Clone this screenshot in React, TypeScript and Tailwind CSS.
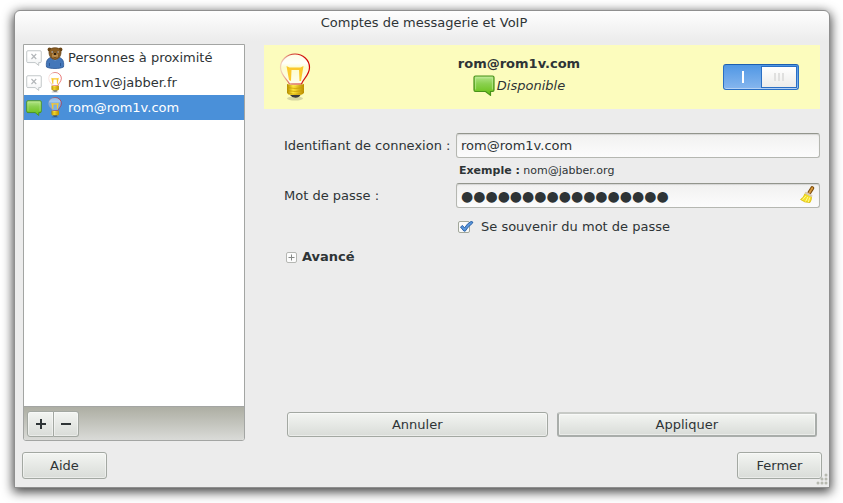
import { useId, useState } from "react";
import type { ReactNode } from "react";

const raised =
  "rounded-[3px] border border-[#a3a8a2] bg-gradient-to-b from-[#f3f5f2] to-[#d9dcd8] text-center shadow-[inset_0_0_0_1px_rgba(255,255,255,0.45)]";

const field =
  "h-[25px] w-full rounded-[3px] border border-[#b5b7b1] border-t-[#92958c] bg-gradient-to-b from-[#f1f1f0] to-[#fcfcfc] pl-1 leading-none text-[#2e3436] shadow-[inset_0_1px_1px_rgba(0,0,0,0.12)] outline-none";

function Bubble({ online, className }: { online: boolean; className: string }) {
  const id = useId();
  return (
    <svg viewBox="0 0 22 21" preserveAspectRatio="none" className={className} aria-hidden="true">
      <defs>
        <linearGradient id={id} x1="0" y1="0" x2="0" y2="1">
          <stop offset="0" stopColor={online ? "#b4e68c" : "#ffffff"} />
          <stop offset="0.4" stopColor={online ? "#8ad04f" : "#ffffff"} />
          <stop offset="1" stopColor={online ? "#66c012" : "#eef0f1"} />
        </linearGradient>
      </defs>
      <path
        d="M2.5 1h17a1.5 1.5 0 0 1 1.5 1.500v12.500a1.5 1.5 0 0 1-1.500 1.500H17.500v3.800L12.500 16.500h-10A1.5 1.5 0 0 1 1 15V2.500a1.500 1.500 0 0 1 1.500-1.500z"
        fill={`url(#${id})`}
        stroke={online ? "#48921a" : "#bcc1c4"}
        strokeWidth="1.2"
      />
      {online ? (
        <path d="M2.6 14.500V2.800h16.8V14.500" fill="none" stroke="#c9f0a4" strokeOpacity="0.6" />
      ) : (
        <path d="M7.500 5.200l6.600 6.600m0-6.600l-6.600 6.600" stroke="#b3b7ba" strokeWidth="1.600" fill="none" />
      )}
    </svg>
  );
}

function Bulb({ className, selected = false }: { className: string; selected?: boolean }) {
  const id = useId();
  return (
    <svg viewBox="0 0 32 48" className={className} aria-hidden="true">
      <defs>
        <linearGradient id={`${id}g`} x1="0" y1="0" x2="0" y2="1">
          <stop offset="0" stopColor="#fff" stopOpacity={selected ? 0.35 : 0.55} />
          <stop offset="0.3" stopColor="#fff" stopOpacity={selected ? 0.5 : 0.95} />
          <stop offset="0.45" stopColor="#fff" stopOpacity="0.25" />
          <stop offset="1" stopColor="#fff" stopOpacity={selected ? 0.3 : 0.75} />
        </linearGradient>
        <linearGradient id={`${id}r`} x1="0" y1="0" x2="1" y2="0">
          <stop offset="0" stopColor="#e8a8a0" stopOpacity="0.5" />
          <stop offset="0.4" stopColor="#cf3a30" />
          <stop offset="1" stopColor="#d40000" />
        </linearGradient>
        <linearGradient id={`${id}b`} x1="0" y1="0" x2="1" y2="0">
          <stop offset="0" stopColor="#b08a00" />
          <stop offset="0.35" stopColor="#ffe63b" />
          <stop offset="1" stopColor="#b98c00" />
        </linearGradient>
      </defs>
      <ellipse cx="16" cy="45.500" rx="8" ry="2" fill="#000" opacity="0.15" />
      <path
        d="M10.500 31C8 26 1.500 22 1.500 14.500a14.500 13.500 0 0 1 29 0C30.500 22 24 26 22.500 31z"
        fill={`url(#${id}g)`}
        stroke={`url(#${id}r)`}
        strokeWidth="1.200"
      />
      <path d="M7.500 13l3 1.500h11l3-1.500-2.500 15h-1.500l-.5-11h-7.500l-.5 11-2-1z" fill="#fbc82c" />
      <path d="M8 31q8 2.500 17 0v9q-2 2-4 2h-9q-3 0-4-2z" fill={`url(#${id}b)`} />
      <path d="M8 34.500q8 2 17 0M8 37.500q8 2 17 0M9 40.500q7 1.500 15 0" stroke="#c79a00" strokeWidth="0.700" fill="none" />
      <path d="M11 42h10.500q-1.500 2.800-5 2.800T11 42z" fill="#39393a" />
    </svg>
  );
}

function Person({ className }: { className: string }) {
  return (
    <svg viewBox="0 0 20 22" className={className} aria-hidden="true">
      <path d="M1.500 20C.5 13 3.500 11 6 10.500h8c2.500.5 5.500 2.500 4.500 9.500-4 2-13 2-17 0z" fill="#4477b9" stroke="#2b5795" strokeWidth="0.8" />
      <path d="M4.500 19v-3m11 3v-3" stroke="#274f8c" strokeWidth="0.8" />
      <path d="M7 11q3 5 6.500 0" fill="#7da4d6" />
      <circle cx="4.500" cy="2.500" r="1.900" fill="#6b4618" />
      <circle cx="15.500" cy="2.500" r="1.900" fill="#6b4618" />
      <path d="M4 5.500C4 2 6.500.8 10 .8s6 1.200 6 4.700-2.500 7-6 7-6-3.500-6-7z" fill="#8a5d22" stroke="#5e3b10" strokeWidth="0.7" />
      <ellipse cx="10" cy="8.500" rx="3" ry="2.800" fill="#bb8d4c" />
      <ellipse cx="10" cy="7" rx="1.500" ry="1" fill="#1e1408" />
      <path d="M6.700 5h1.400M12 5h1.400" stroke="#fff" strokeWidth="1.300" />
      <path d="M7.300 5h1M12 5h1" stroke="#1e1408" strokeWidth="1.100" />
      <path d="M8.300 10.200q1.700 1 3.400 0" stroke="#59370f" strokeWidth="0.7" fill="none" />
    </svg>
  );
}

function Broom() {
  return (
    <svg viewBox="0 0 16 17" className="h-[17px] w-4" aria-hidden="true">
      <path d="M9.500 6.500L12.200 2.200" stroke="#7b4a0a" strokeWidth="4" strokeLinecap="round" />
      <path d="M9.500 6.500L12.200 2.200" stroke="#d99a3c" strokeWidth="2" strokeLinecap="round" strokeDasharray="2 1.500" />
      <path d="M5 7.500l6.500 3q.3 3-1.500 6-5.500.3-9.500-3Q4 11.500 5 7.500z" fill="#f5e126" stroke="#d6b400" strokeWidth="0.700" />
      <path d="M5.800 10l-3.300 3.800M7.800 11l-2.300 4.500M9.800 11.500l-1.500 4.500" stroke="#fff9a0" strokeWidth="0.900" />
      <path d="M6 7l5.300 2.700" stroke="#d9cbb0" strokeWidth="2.400" strokeLinecap="round" />
    </svg>
  );
}

function Account({ icon, online = false, selected = false, children }: { icon: ReactNode; online?: boolean; selected?: boolean; children: ReactNode }) {
  return (
    <li>
      <button
        type="button"
        aria-pressed={selected}
        className={`flex h-[25px] w-full items-center gap-[3px] pl-0.5 text-left ${selected ? "bg-[#4a90d9] text-white" : ""}`}
      >
        <Bubble online={online} className="h-4 w-4 shrink-0" />
        <span className="flex w-5 shrink-0 justify-center">{icon}</span>
        <span>{children}</span>
      </button>
    </li>
  );
}

export default function App() {
  const [login, setLogin] = useState("rom@rom1v.com");
  const [secret, setSecret] = useState("●".repeat(17));
  const [remember, setRemember] = useState(true);
  const [active, setActive] = useState(true);

  return (
    <div className="flex min-h-screen bg-white pt-2.5 pr-[13px] pb-[15px] pl-3.5 font-['DejaVu_Sans',sans-serif] text-[13px] leading-4 text-[#2e3436]">
      <main className="flex flex-1 flex-col rounded-t-md border border-[#8f8f8f] bg-[#ececec] bg-[linear-gradient(#fefefe,#ececec_30px)] px-[7px] pb-2 shadow-[0_3px_11px_1px_rgba(0,0,0,0.75)]">
        <h1 className="pt-1 pb-[13px] pl-1 text-center">Comptes de messagerie et VoIP</h1>

        <div className="flex flex-1 gap-[19px] pr-0.5 pl-px">
          <aside className="flex w-[222px] shrink-0 flex-col overflow-hidden rounded-b-[3px] border border-[#a3a5a3] bg-white">
            <ul className="flex-1">
              <Account icon={<Person className="h-[22px] w-5" />}>Personnes à proximité</Account>
              <Account icon={<Bulb className="h-[21px] w-3.5" />}>rom1v@jabber.fr</Account>
              <Account icon={<Bulb className="h-[21px] w-3.5" selected />} online selected>
                rom@rom1v.com
              </Account>
            </ul>
            <div className="flex border-t border-[#a3a5a3] bg-gradient-to-b from-[#adaea3] to-[#dadbd8] px-[3px] pt-1 pb-[3px]">
              <button type="button" aria-label="Ajouter" className={`${raised} flex h-[26px] w-[27px] items-center justify-center rounded-r-none`}>
                <svg viewBox="0 0 10 10" className="size-2.5" aria-hidden="true">
                  <path d="M5 0v10M0 5h10" stroke="#2e3436" strokeWidth="2" />
                </svg>
              </button>
              <button type="button" aria-label="Supprimer" className={`${raised} flex h-[26px] w-[25px] items-center justify-center rounded-l-none border-l-0`}>
                <svg viewBox="0 0 10 10" className="size-2.5" aria-hidden="true">
                  <path d="M0 5h10" stroke="#2e3436" strokeWidth="2" />
                </svg>
              </button>
            </div>
          </aside>

          <section className="flex flex-1 flex-col pt-px">
            <header className="flex h-16 items-center bg-[#fcfcbd] pr-[21px] pl-[15px]">
              <Bulb className="h-12 w-8" />
              <div className="flex flex-1 flex-col items-center gap-[3px] pb-0.5 pl-1">
                <strong>rom@rom1v.com</strong>
                <span className="flex items-center gap-0.5 italic">
                  <Bubble online className="h-[21px] w-[22px]" />
                  Disponible
                </span>
              </div>
              <button
                type="button"
                role="switch"
                aria-label="Compte activé"
                aria-checked={active}
                onClick={() => setActive(!active)}
                className="flex h-[26px] w-19 rounded-[3px] border border-[#2a6fc4] border-t-[#1c5fb0] bg-gradient-to-b from-[#4f97e4] to-[#86b6ee] p-px shadow-[inset_0_-1px_0_#b3d1f5]"
              >
                <span className="flex h-full flex-1 items-center justify-center">
                  <span className="h-3 w-0.5 bg-white" />
                </span>
                <span className="flex h-[22px] w-9 items-center justify-center gap-0.5 border border-[#2a6fc4] bg-gradient-to-b from-white to-[#ececea]">
                  <span className="h-2 w-0.5 bg-[#e0e0df]" />
                  <span className="h-2 w-0.5 bg-[#e0e0df]" />
                  <span className="h-2 w-0.5 bg-[#e0e0df]" />
                </span>
              </button>
            </header>

            <form className="flex flex-1 flex-col" onSubmit={(event) => event.preventDefault()}>
              <div className="mt-6 grid grid-cols-[172px_1fr] items-center pl-5">
                <label htmlFor="login">Identifiant de connexion :</label>
                <input id="login" type="text" value={login} onChange={(event) => setLogin(event.target.value)} className={field} />
                <p className="col-start-2 my-1 pl-[3px] text-[11px] leading-[17px]">
                  <b>Exemple :</b> nom@jabber.org
                </p>
                <label htmlFor="secret">Mot de passe :</label>
                <div className="relative">
                  <input
                    id="secret"
                    type="text"
                    autoComplete="off"
                    value={secret}
                    onChange={(event) => setSecret(event.target.value)}
                    className={`${field} pr-6 text-[14px]`}
                  />
                  <button type="button" aria-label="Effacer" onClick={() => setSecret("")} className="absolute top-[3px] right-1">
                    <Broom />
                  </button>
                </div>
                <label className="col-start-2 mt-[11px] flex items-center gap-[7px] pl-0.5">
                  <span className="grid size-4 place-items-center">
                    <input
                      type="checkbox"
                      checked={remember}
                      onChange={(event) => setRemember(event.target.checked)}
                      className="peer col-start-1 row-start-1 size-3 justify-self-start appearance-none rounded-[2px] border border-[#a2a79a] bg-[#fafafa]"
                    />
                    <svg viewBox="0 0 16 16" className="pointer-events-none invisible col-start-1 row-start-1 size-4 peer-checked:visible" aria-hidden="true">
                      <path d="M2.500 8l2-1.500L6.500 9q2.500-4.500 6.500-6.500l1.800.5-.3 1.200Q9.500 8 7.200 12.200L5.800 12z" fill="#5b97dc" stroke="#2a62a8" strokeWidth="1" strokeLinejoin="round" />
                    </svg>
                  </span>
                  <span>Se souvenir du mot de passe</span>
                </label>
              </div>

              <button type="button" aria-expanded="false" className="mt-[14px] ml-[22px] flex items-center gap-[5px] self-start font-bold">
                <svg viewBox="0 0 11 11" className="size-[11px]" aria-hidden="true">
                  <rect x="0.500" y="0.500" width="10" height="10" rx="1.500" fill="#fcfcfc" stroke="#b5b7b3" />
                  <path d="M5.500 2.500v6M2.500 5.500h6" stroke="#858886" />
                </svg>
                Avancé
              </button>

              <div className="mt-auto grid grid-cols-2 gap-[9px] pr-[3px] pb-1 pl-[23px]">
                <button type="button" className={`${raised} h-[25px]`}>Annuler</button>
                <button type="submit" className={`${raised} h-[25px] border-2 border-[#a9adaa] border-t-[#c7cac6]`}>Appliquer</button>
              </div>
            </form>
          </section>
        </div>

        <footer className="relative mt-[11px] flex justify-between">
          <button type="button" className={`${raised} h-[27px] w-[85px]`}>Aide</button>
          <button type="button" className={`${raised} h-[27px] w-[85px]`}>Fermer</button>
          <svg viewBox="0 0 12 12" className="absolute -right-1.5 -bottom-1.5 size-3" aria-hidden="true">
            <g fill="#b7b9b0">
              <circle cx="10" cy="2" r="1.500" />
              <circle cx="6" cy="6" r="1.500" />
              <circle cx="10" cy="6" r="1.500" />
              <circle cx="2" cy="10" r="1.500" />
              <circle cx="6" cy="10" r="1.500" />
              <circle cx="10" cy="10" r="1.500" />
            </g>
          </svg>
        </footer>
      </main>
    </div>
  );
}
